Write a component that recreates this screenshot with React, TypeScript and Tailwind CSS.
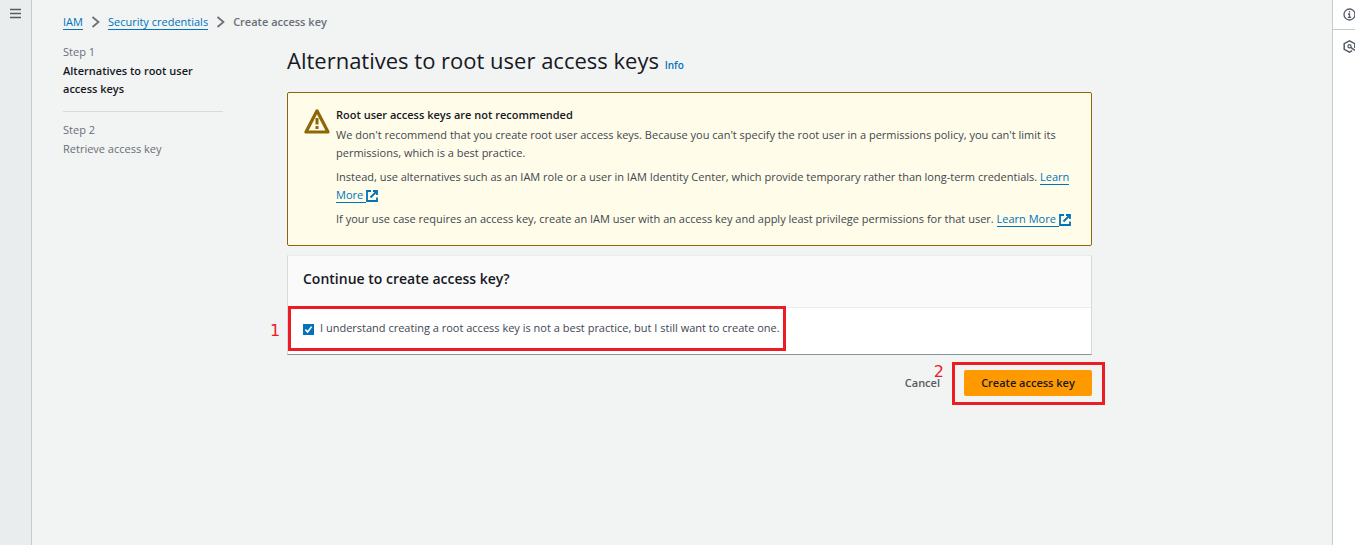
import { useState, type ReactNode } from "react";

function ExternalIcon() {
  return (
    <svg viewBox="0 0 12 12" className="inline-block size-3 align-[-3px]" fill="none" stroke="currentColor" strokeWidth="1.800" aria-hidden="true">
      <path d="M5 1H1v10h10V7.500" />
      <path d="M7 1h4v4M11 1 4.500 7.500" />
    </svg>
  );
}

function TextLink({ children, external }: { children: ReactNode; external?: boolean }) {
  return (
    <a href="#" className="text-[#0073bb]">
      <span className="border-b border-[#0073bb]">
        {children}
        {external && <>&nbsp;</>}
      </span>
      {external && <ExternalIcon />}
    </a>
  );
}

function Chevron() {
  return (
    <svg viewBox="0 0 9 12" className="h-3 w-[9px] text-[#687078]" fill="none" stroke="currentColor" strokeWidth="1.700" aria-hidden="true">
      <path d="M1.500 1 7.500 6l-6 5" />
    </svg>
  );
}

function Breadcrumbs() {
  return (
    <nav aria-label="Breadcrumbs" className="flex h-4 items-center gap-2 leading-[14px] text-[#687078]">
      <TextLink>IAM</TextLink>
      <Chevron />
      <TextLink>Security credentials</TextLink>
      <Chevron />
      <span className="font-semibold">Create access key</span>
    </nav>
  );
}

function Steps() {
  return (
    <ol className="w-40 shrink-0 text-[#687078]">
      <li className="border-b border-[#d5dbdb] pb-[13px]">
        <div className="pb-px">Step 1</div>
        <div className="font-semibold text-[#16191f]">Alternatives to root user access keys</div>
      </li>
      <li className="pt-[9px]">
        <div className="pb-px">Step 2</div>
        <div>Retrieve access key</div>
      </li>
    </ol>
  );
}

function Warning() {
  return (
    <section className="flex gap-1.5 rounded-xs border border-[#8d6605] bg-[#fffce9] pt-[13px] pr-4 pb-[17px] pl-4 text-[#414750]">
      <svg viewBox="0 0 26 26" className="mt-0.5 size-[26px] shrink-0" fill="none" stroke="#8d6605" aria-hidden="true">
        <path d="M13 2.800 2 24h22z" strokeWidth="3.200" strokeLinejoin="round" />
        <path d="M13 10v6.500M13 18v3" strokeWidth="3" />
      </svg>
      <div className="flex flex-col gap-1.5">
        <div>
          <h2 className="pb-0.5 font-semibold text-[#16191f]">Root user access keys are not recommended</h2>
          <p>
            We don't recommend that you create root user access keys. Because you can't specify the root user in a
            permissions policy, you can't limit its permissions, which is a best practice.
          </p>
        </div>
        <p>
          Instead, use alternatives such as an IAM role or a user in IAM Identity Center, which provide temporary rather
          than long-term credentials. <TextLink external>Learn More</TextLink>
        </p>
        <p>
          If your use case requires an access key, create an IAM user with an access key and apply least privilege
          permissions for that user. <TextLink external>Learn More</TextLink>
        </p>
      </div>
    </section>
  );
}

export default function App() {
  const [agreed, setAgreed] = useState(true);
  return (
    <div className="flex min-h-screen bg-[#f2f3f3] font-['Open_Sans','Noto_Sans',sans-serif] text-[11px] leading-[18px]">
      <aside className="flex w-8 shrink-0 justify-center border-r border-[#c4cbcb] bg-[#eaeded] pt-2">
        <button type="button" aria-label="Open navigation" className="h-3 w-3">
          <svg viewBox="0 0 12 12" className="size-3" stroke="#545b64" strokeWidth="1.700" aria-hidden="true">
            <path d="M0 1.500h11M0 5.500h11M0 9.500h11" />
          </svg>
        </button>
      </aside>

      <main className="min-w-0 flex-1 pt-3.5 pr-8 pl-[31px]">
        <div className="max-w-[1029px]">
          <Breadcrumbs />
          <div className="mt-[13px] flex gap-16">
            <Steps />
            <div className="min-w-0 flex-1">
              <h1 className="pt-px pb-4 text-[22px] leading-8 text-[#16191f]">
                Alternatives to root user access keys{" "}
                <a href="#" className="text-[10px] leading-none font-semibold text-[#0073bb]">Info</a>
              </h1>
              <Warning />

              <section className="mt-[9px] border border-t-[#eaeded] border-x-[#d5dbdb] border-b-[#879596] bg-white">
                <h2 className="border-b border-[#eaeded] bg-[#fafafa] px-[15px] pt-3 pb-[17px] text-[14px] leading-[22px] font-semibold text-[#16191f]">
                  Continue to create access key?
                </h2>
                <div className="relative flex h-[46px] items-center">
                  <label className="flex items-center gap-1.5 pb-[7px] pl-[15px] text-[#414750]">
                    <input
                      type="checkbox"
                      checked={agreed}
                      onChange={(event) => setAgreed(event.target.checked)}
                      className="peer sr-only"
                    />
                    <span className="mt-1 flex size-[11px] items-center justify-center border border-[#879596] bg-white text-white peer-checked:border-[#0073bb] peer-checked:bg-[#0073bb]">
                      <svg viewBox="0 0 10 10" className="size-[9px] shrink-0" fill="none" stroke="currentColor" strokeWidth="1.800" aria-hidden="true">
                        <path d="M1.500 5.200 4 7.800 8.500 1.800" />
                      </svg>
                    </span>
                    I understand creating a root access key is not a best practice, but I still want to create one.
                  </label>
                  <div className="pointer-events-none absolute -top-0.5 left-0 h-[45px] w-[498px] border-3 border-[#ed1c24]" />
                  <span className="pointer-events-none absolute top-[11px] -left-[18px] font-['DejaVu_Sans',sans-serif] text-[16px] leading-6 text-[#ed1c24]">1</span>
                </div>
              </section>

              <div className="mt-[15px] flex items-center justify-end gap-6 font-semibold">
                <button type="button" className="relative text-[#545b64]">
                  Cancel
                  <span className="pointer-events-none absolute -top-3.5 -right-1 font-['DejaVu_Sans',sans-serif] text-[16px] leading-6 font-normal text-[#ed1c24]">2</span>
                </button>
                <div className="relative">
                  <button type="button" className="h-[26px] w-32 rounded-xs bg-[#ff9900] text-[#16191f]">
                    Create access key
                  </button>
                  <div className="pointer-events-none absolute -top-2 -left-3 h-[43px] w-[153px] border-3 border-[#ed1c24]" />
                </div>
              </div>
            </div>
          </div>
        </div>
      </main>

      <aside className="w-[23px] shrink-0 overflow-hidden border-l border-[#c4cbcb] bg-white text-[#545b64]">
        <button type="button" aria-label="Info" className="flex h-[30px] w-full items-center border-b border-[#c4cbcb] pl-[10px]">
          <svg viewBox="0 0 13 13" className="size-[13px] shrink-0" fill="none" stroke="currentColor" strokeWidth="1.300" aria-hidden="true">
            <circle cx="6.500" cy="6.500" r="5.500" />
            <path d="M6.500 3v1.500M5 6h1.500v3.200M4.800 9.300h3.400" />
          </svg>
        </button>
        <button type="button" aria-label="Tools" className="flex h-8 w-full items-center pt-px pl-[10px]">
          <svg viewBox="0 0 13 13" className="size-[13px] shrink-0" fill="none" stroke="currentColor" strokeWidth="1.500" aria-hidden="true">
            <path d="M11.800 8V3.700L6.500.9 1.200 3.700v5.600l5.300 2.800 2.700-1.400" />
            <circle cx="6.500" cy="6.300" r="1.600" strokeWidth="1.200" />
            <path d="M7.700 7.300 12 10.300" />
          </svg>
        </button>
      </aside>
    </div>
  );
}
